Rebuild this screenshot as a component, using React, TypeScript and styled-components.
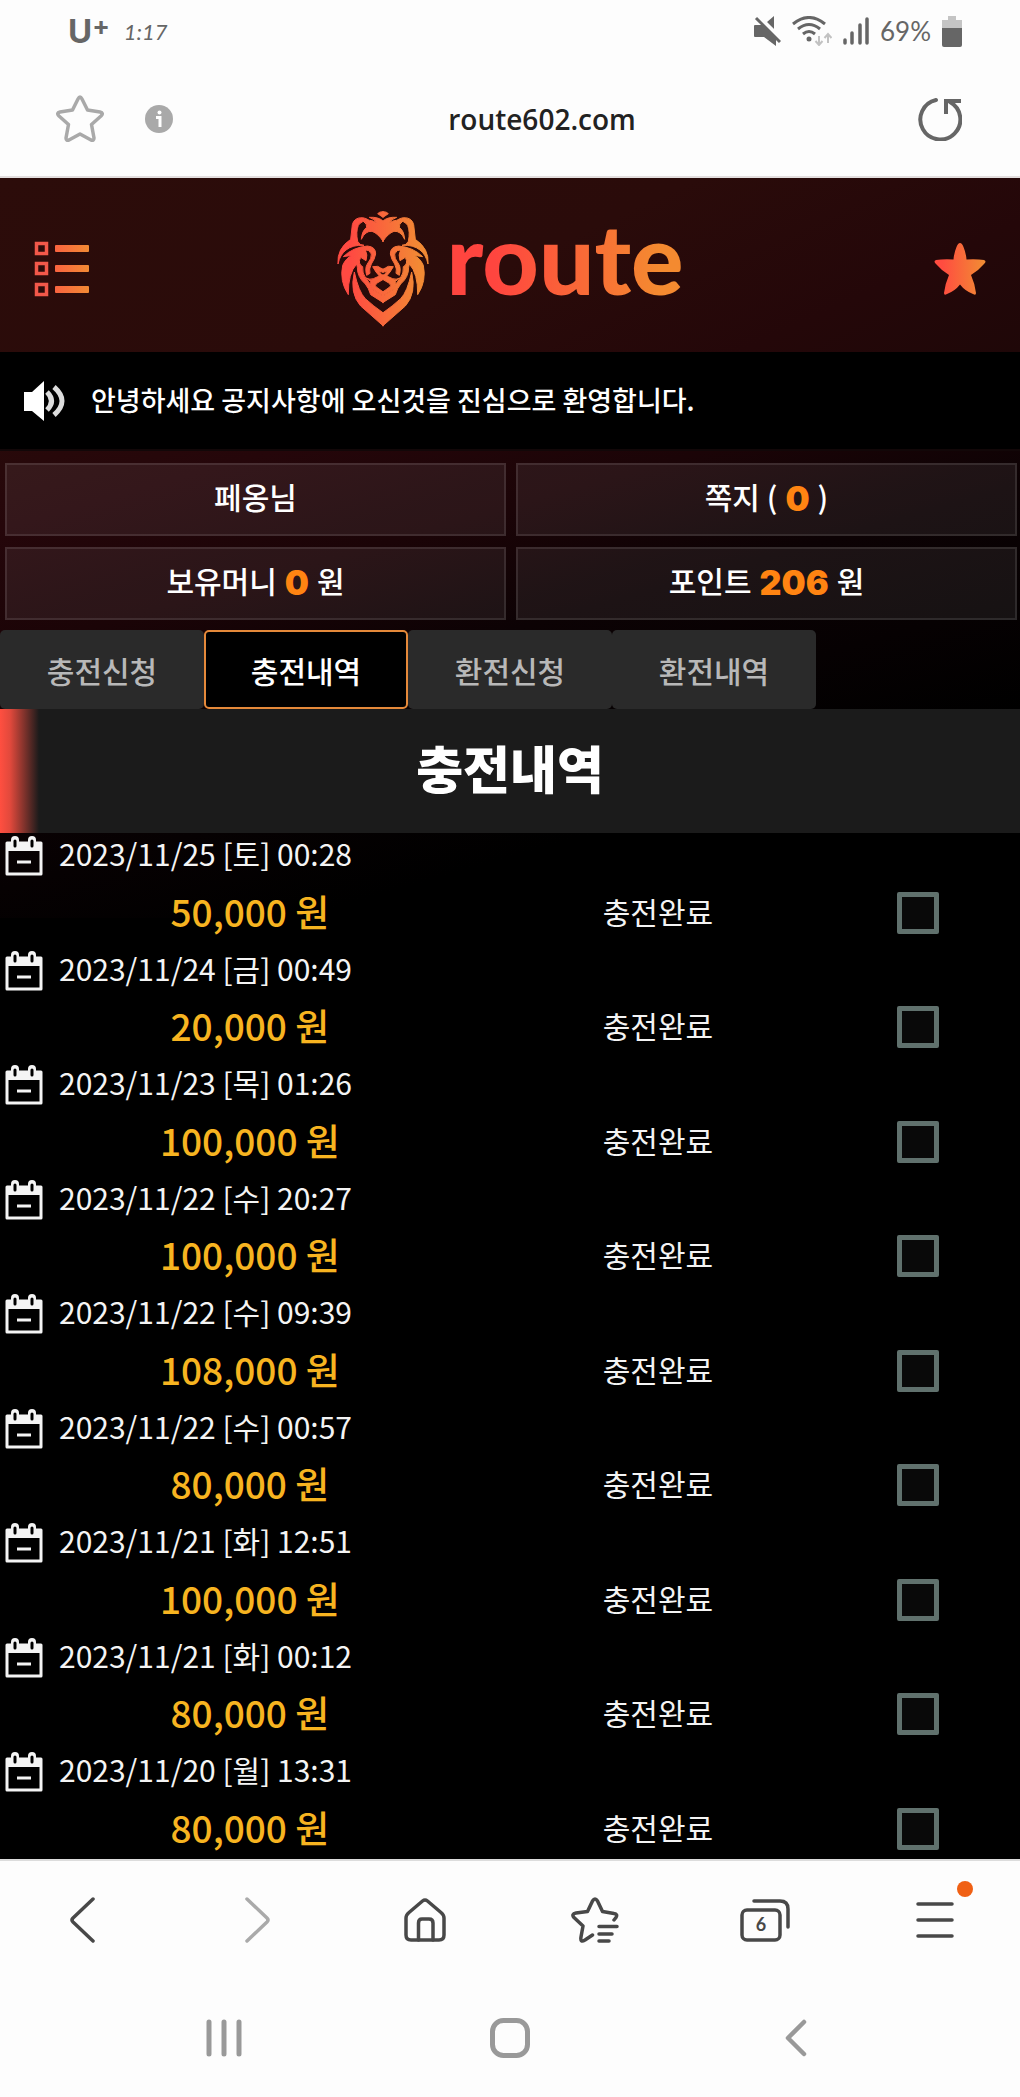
import React from "react";
import styled, { createGlobalStyle, css } from "styled-components";

const GlobalStyle = createGlobalStyle`
  * { box-sizing: border-box; }
  body {
    margin: 0;
    background: #fdfdfd;
    font-family: "Noto Sans CJK KR", "Noto Sans", sans-serif;
  }
  button { font: inherit; color: inherit; border: 0; padding: 0; background: none; cursor: pointer; }
  svg { display: block; }
`;

const Phone = styled.div`
  display: flex;
  flex-direction: column;
  height: 100vh;
`;

/* ---------- device status and address bar ---------- */

const StatusBar = styled.div`
  display: flex;
  align-items: center;
  justify-content: space-between;
  height: 60px;
  padding: 2px 58px 0 68px;
  color: #666;
  font-family: Lato, "Open Sans", sans-serif;
  font-size: 26px;
`;

const StatusGroup = styled.div<{ $gap: number }>`
  display: flex;
  align-items: center;
  gap: ${(p) => p.$gap}px;
`;

const Carrier = styled.span`
  font-family: Inter, sans-serif;
  font-size: 33px;
  font-weight: 700;
  line-height: 36px;
  sup { font-size: 26px; line-height: 0; vertical-align: 8px; }
`;

const Clock = styled.span`
  font-style: italic;
  font-size: 22px;
`;

const AddressBar = styled.div`
  display: grid;
  grid-template-columns: 150px 1fr 150px;
  align-items: center;
  height: 118px;
  padding: 2px 58px 0 56px;
  border-bottom: 2px solid #e3dede;
`;

const AddressActions = styled.div<{ $end?: boolean }>`
  display: flex;
  align-items: center;
  gap: 41px;
  color: #a9a9a9;
  ${(p) => p.$end && css`
    justify-content: flex-end;
    color: #666;
  `}
`;

const Address = styled.span`
  margin-left: 66px;
  justify-self: center;
  color: #222;
  font-family: "Open Sans", sans-serif;
  font-size: 28px;
  font-weight: 600;
`;

/* ---------- site ---------- */

const Site = styled.main`
  flex: 1;
  min-height: 0;
  overflow-y: auto;
  scrollbar-width: none;
  color: #fff;
  background: #000 linear-gradient(164deg, #2c0c0a 0%, #2a0b0a 20%, #25060a 34%, #1b0407 46%, #0c0204 58%, #000 80%) no-repeat;
  background-size: 100% 740px;
`;

const SiteHeader = styled.header`
  display: grid;
  grid-template-columns: 1fr auto 1fr;
  align-items: center;
  height: 174px;
  padding: 8px 34px 0;
  background: linear-gradient(155deg, #2c0c0a 0%, #2a0b0a 50%, #240709 80%, #1f0708 100%);
  & > :last-child { justify-self: end; }
`;

const Brand = styled.a`
  display: flex;
  align-items: center;
  gap: 18px;
  text-decoration: none;
`;

const BrandName = styled.span`
  font-family: Lato, sans-serif;
  font-size: 98px;
  font-weight: 900;
  line-height: 116px;
  padding-bottom: 24px;
  color: transparent;
  background: linear-gradient(90deg, #ff453f 20%, #f48a30 90%);
  background-clip: text;
`;

const Notice = styled.div`
  display: flex;
  align-items: center;
  gap: 26px;
  height: 99px;
  padding: 0 24px;
  background: #000;
  border-bottom: 2px solid #120708;
  font-size: 27px;
  font-weight: 500;
  p { margin: 0; padding-bottom: 3px; }
`;

const Account = styled.section`
  display: grid;
  grid-template-columns: 1fr 1fr;
  gap: 11px 10px;
  padding: 12px 3px 10px 5px;
`;

const AccountCell = styled.div`
  display: flex;
  align-items: center;
  justify-content: center;
  gap: 8px;
  height: 73px;
  border: 2px solid rgba(255, 255, 255, 0.1);
  background: rgba(255, 255, 255, 0.07);
  font-size: 30px;
  font-weight: 500;
  line-height: 36px;
  padding-bottom: 8px;
`;

const Figure = styled.strong`
  padding-top: 6px;
  color: #ff8412;
  font-family: Inter, sans-serif;
  font-size: 34px;
  font-weight: 900;
  line-height: 36px;
`;

const Tabs = styled.nav`
  display: grid;
  grid-template-columns: repeat(5, 1fr);
`;

const Tab = styled.button<{ $active?: boolean }>`
  height: 79px;
  border-radius: 5px;
  color: #b8b8b8;
  background: #2a2a2a;
  font-size: 30px;
  font-weight: 500;
  line-height: 44px;
  ${(p) => p.$active && css`
    color: #fff;
    background: #000;
    border: 2px solid #e5893a;
  `}
`;

const Title = styled.h1`
  margin: 0;
  padding-bottom: 8px;
  height: 124px;
  display: flex;
  align-items: center;
  justify-content: center;
  background: linear-gradient(90deg, #ff4f40 0, #e2493c 10px, #1b1b1b 39px);
  font-size: 51px;
  font-weight: 900;
`;

const History = styled.table`
  width: 100%;
  table-layout: fixed;
  border-collapse: collapse;
  td, th { padding: 0; text-align: center; vertical-align: middle; }
`;

const Record = styled.tbody`
  & > tr:first-child { height: 44px; }
  & > tr:last-child { height: 70px; }
  &:nth-of-type(odd) > tr:last-child { height: 71px; }
`;

const DateLine = styled.div`
  display: flex;
  align-items: center;
  gap: 16px;
  height: 44px;
  padding: 2px 0 0 5px;
  color: #f4f4f4;
  font-size: 30px;
  font-weight: 400;
  line-height: 36px;
  time { padding-bottom: 6px; }
`;

const Amount = styled.td`
  color: #f7b420;
  font-size: 37px;
  font-weight: 500;
  line-height: 44px;
  && { padding-bottom: 4px; }
`;

const State = styled.td`
  color: #f4f4f4;
  font-size: 30px;
  line-height: 44px;
  && { padding-bottom: 4px; }
`;

const Check = styled.input`
  appearance: none;
  display: block;
  width: 42px;
  height: 42px;
  margin: 0 auto;
  border: 5px solid #60716d;
  border-radius: 2px;
  background: #090909;
  &:checked { background: #60716d; }
`;

/* ---------- bottom bars ---------- */

const BrowserNav = styled.nav`
  display: grid;
  grid-template-columns: repeat(6, 1fr);
  height: 120px;
  border-top: 2px solid #dcdcdc;
  color: #484848;
`;

const DeviceNav = styled.nav`
  display: grid;
  grid-template-columns: repeat(3, 1fr);
  height: 118px;
  padding: 0 8%;
  color: #999;
`;

const BarButton = styled.button<{ $muted?: boolean }>`
  position: relative;
  display: flex;
  align-items: center;
  justify-content: center;
  color: ${(p) => (p.$muted ? "#aaa" : "inherit")};
`;

const Dot = styled.span`
  position: absolute;
  top: 20px;
  left: calc(50% + 22px);
  width: 16px;
  height: 16px;
  border-radius: 50%;
  background: #f06014;
`;

/* ---------- drawings ---------- */

const line = { fill: "none", stroke: "currentColor", strokeLinecap: "round", strokeLinejoin: "round" } as const;

const LionHalf = () => (
  <g>
    <path d="M189 64 L173 53 Q178 47 189 47Z" />
    <path d="M190 76 Q176 62 148 64 Q164 70 170 80 Q148 68 130 76 Q142 84 140 94 Q126 104 124 130 Q136 104 156 106 Q174 112 190 137Z" />
    <path d="M92 130 L97 86 Q102 64 128 65 Q140 67 147 73 Q124 74 115 88 Q107 108 113 136 Q118 148 132 148 Q98 146 78 162 Q60 176 54 204 Q50 158 92 130Z" />
    <path d="M70 182 Q98 154 142 150 Q167 152 167 174 Q164 190 154 204 Q146 220 150 232 L140 238 Q134 216 142 204 Q156 186 154 174 Q148 160 136 162 Q144 176 138 194 L122 184 Q112 204 128 212 Q126 232 138 248 Q152 262 160 282 L190 301 V320 L152 296 Q146 276 136 264 Q112 244 112 214 L110 204 Q84 232 85 296 Q58 256 68 208 Q78 186 96 178Z" />
    <path d="M158 212 Q176 208 182 216 L190 220 V229 L179 226 Q178 234 190 238 V250 L170 262 Q162 270 170 274 L190 288 V300 L158 280 Q150 266 152 256 L138 246 Q150 252 160 248 L178 240 Q168 230 158 212Z" />
    <path d="M103 228 Q116 288 136 308 Q160 330 190 351 V390 L122 330 Q88 292 103 228Z" />
  </g>
);

const Lion = () => (
  <svg width="92" height="116" viewBox="51 45 276 348" aria-hidden="true">
    <defs>
      <linearGradient id="mane" x1="0" x2="1">
        <stop offset="0.15" stopColor="#ff4a42" />
        <stop offset="0.9" stopColor="#f28a34" />
      </linearGradient>
      <mask id="lion" maskUnits="userSpaceOnUse" x="51" y="45" width="276" height="348">
        <g fill="#fff" stroke="#fff" strokeWidth="3">
          <LionHalf />
          <g transform="matrix(-1 0 0 1 378 0)"><LionHalf /></g>
        </g>
      </mask>
    </defs>
    <rect x="51" y="45" width="276" height="348" fill="url(#mane)" mask="url(#lion)" />
  </svg>
);

const ListIcon = () => (
  <svg width="56" height="56" viewBox="0 0 56 56" aria-hidden="true">
    <defs>
      <linearGradient id="bar" gradientUnits="userSpaceOnUse" x1="20" x2="55" y1="0" y2="0">
        <stop offset="0" stopColor="#fa6240" />
        <stop offset="1" stopColor="#f28a34" />
      </linearGradient>
    </defs>
    {[0, 20, 41].map((y) => (
      <g key={y}>
        <rect x="2.5" y={y + 2.5} width="10" height="10" fill="none" stroke="#f2584a" strokeWidth="3.500" />
        <rect x="21" y={y + 4} width="34" height="7" rx="1" fill="url(#bar)" />
      </g>
    ))}
  </svg>
);

const FavouriteIcon = () => (
  <svg width="52" height="54" viewBox="0 0 52 54" aria-hidden="true">
    <defs>
      <linearGradient id="fav" x1="0" x2="1">
        <stop offset="0.15" stopColor="#ff4c40" />
        <stop offset="0.95" stopColor="#f28a34" />
      </linearGradient>
    </defs>
    <path fill="url(#fav)" d="M26 1 Q28 1 29.500 5 Q32 11 32.500 17.500 Q43 17 50 18 Q53 19 50 22 Q45 28 37 33 Q41 42 42 51 Q42 54 39 52 Q31 49 26 42.500 Q21 49 13 52 Q10 54 10 51 Q11 42 15 33 Q7 28 2 22 Q-1 19 2 18 Q9 17 19.500 17.500 Q20 11 22.500 5 Q24 1 26 1Z" />
  </svg>
);

const SpeakerIcon = () => (
  <svg width="41" height="42" viewBox="0 0 41 42" fill="none" aria-hidden="true">
    <path fill="#fff" d="M0 12h8L20 1v40L8 31H0z" />
    <path stroke="#ddd" strokeWidth="5" d="M23 12q9 9 0 18M30 7q16 14 0 28" />
  </svg>
);

const CalendarIcon = () => (
  <svg width="38" height="40" viewBox="0 0 38 40" aria-hidden="true">
    <path d="M2 7H36V38H2Z" fill="none" stroke="#f4f4f4" strokeWidth="3" strokeLinejoin="round" />
    <path d="M1 6H37V15H1Z" fill="#f4f4f4" />
    <path d="M10 4V10M27 4V10" stroke="#f4f4f4" strokeWidth="8" strokeLinecap="round" />
    <path d="M10 5V10M27 5V10" stroke="#000" strokeWidth="3" strokeLinecap="round" />
    <path d="M12 26H26" stroke="#f4f4f4" strokeWidth="3" />
  </svg>
);

const MuteIcon = () => (
  <svg width="27" height="30" viewBox="0 0 27 30" aria-hidden="true">
    <path fill="#666" d="M1 9H8L22 22V30L10 21H1Q0 21 0 20V10Q0 9 1 9ZM13 6L20 0V13Z" />
    <path d="M5 1L28 23" stroke="#fdfdfd" strokeWidth="3" />
    <path d="M2 2L26 26" stroke="#666" strokeWidth="3" />
  </svg>
);

const WifiIcon = () => (
  <svg width="40" height="30" viewBox="0 0 40 30" fill="none" stroke="#666" strokeWidth="3" aria-hidden="true">
    <path d="M1 8Q17-5 33 8M6 13Q17 4 28 13M11 18Q17 13 23 18" />
    <circle cx="17" cy="23" r="2.500" fill="#666" stroke="none" />
    <path stroke="#c2c2c2" strokeWidth="2" d="M27 20V29M23.500 25L27 29L30.500 25M36 27V18M32.500 22L36 18L39.500 22" />
  </svg>
);

const SignalIcon = () => (
  <svg width="26" height="28" viewBox="0 0 26 28" {...line} strokeWidth="3.500" aria-hidden="true">
    <path d="M2 23V26M9 16V26M17 8V26M24 2V26" />
  </svg>
);

const BatteryIcon = () => (
  <svg width="20" height="31" viewBox="0 0 20 31" aria-hidden="true">
    <path fill="#c4c4c4" d="M6 0H14V4H20V13H0V4H6Z" />
    <path fill="#666" d="M0 12H20V29Q20 31 18 31H2Q0 31 0 29Z" />
  </svg>
);

const StarOutline = () => (
  <svg width="48" height="48" viewBox="0 0 48 48" {...line} strokeWidth="3.500" aria-hidden="true">
    <path d="M22 4Q24 0 26 4L31.500 15L44 17Q48 18 45 21L35.500 29.500L38 43Q38 46 35 45L24 39L13 45Q10 46 10 43L12.500 29.500L3 21Q0 18 4 17L16.500 15Z" />
  </svg>
);

const InfoIcon = () => (
  <svg width="28" height="28" viewBox="0 0 28 28" aria-hidden="true">
    <circle cx="14" cy="14" r="14" fill="#a9a9a9" />
    <path d="M11 12.500H15V22" fill="none" stroke="#fff" strokeWidth="3" />
    <circle cx="14.500" cy="7.500" r="2" fill="#fff" />
  </svg>
);

const ReloadIcon = () => (
  <svg width="44" height="44" viewBox="0 0 44 44" {...line} strokeWidth="4" aria-hidden="true">
    <path d="M18 3A20 20 0 1 0 32 5" />
    <path strokeLinecap="butt" strokeLinejoin="miter" d="M28 17V4H43" />
  </svg>
);

const ChevronIcon = ({ right }: { right?: boolean }) => (
  <svg width="32" height="46" viewBox="0 0 32 46" {...line} strokeWidth="3.500" aria-hidden="true">
    <path d={right ? "M8 2L28 21Q30 23 28 25L8 44" : "M24 2L4 21Q2 23 4 25L24 44"} />
  </svg>
);

const HomeIcon = () => (
  <svg width="42" height="44" viewBox="0 0 42 44" {...line} strokeWidth="3.500" aria-hidden="true">
    <path d="M18.500 3Q21 1 23.500 3L37 14.500Q40 17 40 20V37Q40 42 35 42H7Q2 42 2 37V20Q2 17 5 14.500Z" />
    <path d="M14.500 42V25Q14.500 21 18 21H25Q29 21 29 25V42" />
  </svg>
);

const BookmarksIcon = () => (
  <svg width="48" height="46" viewBox="0 0 48 46" {...line} strokeWidth="3.500" aria-hidden="true">
    <path d="M21.500 38L14 43Q9 46 10 40L12 29L3 20.500Q0 17 5 16L16.500 14.500L21.500 4Q24 0 26.500 4L31.500 14.500L43 16.500Q47 17 45 20.500L43 23" />
    <path d="M28 29.500H46M28 37H41M28 44H38" />
  </svg>
);

const PagesIcon = () => (
  <svg width="50" height="44" viewBox="0 0 50 44" aria-hidden="true">
    <g {...line} strokeWidth="3.500">
      <rect x="2" y="12" width="38" height="30" rx="5" />
      <path d="M14 3H40Q48 3 48 11V29" />
    </g>
    <text x="21" y="33" textAnchor="middle" fill="currentColor" fontFamily="Lato, sans-serif" fontSize="18" fontWeight="700">6</text>
  </svg>
);

const MenuIcon = () => (
  <svg width="40" height="38" viewBox="0 0 40 38" {...line} strokeWidth="3.500" aria-hidden="true">
    <path d="M3 3H37M3 19H37M3 35H37" />
  </svg>
);

const RecentsIcon = () => (
  <svg width="36" height="38" viewBox="0 0 36 38" {...line} strokeWidth="5" aria-hidden="true">
    <path d="M3 3V35M18 3V35M33 3V35" />
  </svg>
);

const HomeKeyIcon = () => (
  <svg width="40" height="40" viewBox="0 0 40 40" {...line} strokeWidth="5" aria-hidden="true">
    <rect x="2.500" y="2.500" width="35" height="35" rx="11" />
  </svg>
);

const BackKeyIcon = () => (
  <svg width="22" height="38" viewBox="0 0 22 38" {...line} strokeWidth="4.500" aria-hidden="true">
    <path d="M19 3L3 19L19 35" />
  </svg>
);

/* ---------- data ---------- */

const records = [
  { date: "2023/11/25 [토] 00:28", amount: "50,000" },
  { date: "2023/11/24 [금] 00:49", amount: "20,000" },
  { date: "2023/11/23 [목] 01:26", amount: "100,000" },
  { date: "2023/11/22 [수] 20:27", amount: "100,000" },
  { date: "2023/11/22 [수] 09:39", amount: "108,000" },
  { date: "2023/11/22 [수] 00:57", amount: "80,000" },
  { date: "2023/11/21 [화] 12:51", amount: "100,000" },
  { date: "2023/11/21 [화] 00:12", amount: "80,000" },
  { date: "2023/11/20 [월] 13:31", amount: "80,000" },
];

const tabs = ["충전신청", "충전내역", "환전신청", "환전내역"];

export default function App() {
  return (
    <Phone>
      <GlobalStyle />
      <StatusBar>
        <StatusGroup $gap={14}>
          <Carrier>U<sup>+</sup></Carrier>
          <Clock>1:17</Clock>
        </StatusGroup>
        <StatusGroup $gap={11}>
          <MuteIcon />
          <WifiIcon />
          <SignalIcon />
          <span>69%</span>
          <BatteryIcon />
        </StatusGroup>
      </StatusBar>
      <AddressBar>
        <AddressActions>
          <button aria-label="Bookmark"><StarOutline /></button>
          <button aria-label="Site information"><InfoIcon /></button>
        </AddressActions>
        <Address>route602.com</Address>
        <AddressActions $end>
          <button aria-label="Reload"><ReloadIcon /></button>
        </AddressActions>
      </AddressBar>

      <Site>
        <SiteHeader>
          <button aria-label="메뉴"><ListIcon /></button>
          <Brand href="#">
            <Lion />
            <BrandName>route</BrandName>
          </Brand>
          <button aria-label="즐겨찾기"><FavouriteIcon /></button>
        </SiteHeader>
        <Notice>
          <SpeakerIcon />
          <p>안녕하세요 공지사항에 오신것을 진심으로 환영합니다.</p>
        </Notice>
        <Account>
          <AccountCell>페옹님</AccountCell>
          <AccountCell>쪽지 ( <Figure>0</Figure> )</AccountCell>
          <AccountCell>보유머니 <Figure>0</Figure> 원</AccountCell>
          <AccountCell>포인트 <Figure>206</Figure> 원</AccountCell>
        </Account>
        <Tabs>
          {tabs.map((name, i) => (
            <Tab key={name} $active={i === 1}>{name}</Tab>
          ))}
        </Tabs>
        <Title>충전내역</Title>
        <History>
          <colgroup>
            <col width="49%" />
            <col width="31%" />
            <col width="20%" />
          </colgroup>
          {records.map((r) => (
            <Record key={r.date}>
              <tr>
                <th colSpan={3} scope="rowgroup">
                  <DateLine>
                    <CalendarIcon />
                    <time>{r.date}</time>
                  </DateLine>
                </th>
              </tr>
              <tr>
                <Amount>{r.amount} 원</Amount>
                <State>충전완료</State>
                <td><Check type="checkbox" aria-label={r.date} /></td>
              </tr>
            </Record>
          ))}
        </History>
      </Site>

      <BrowserNav>
        <BarButton aria-label="Back"><ChevronIcon /></BarButton>
        <BarButton aria-label="Forward" $muted><ChevronIcon right /></BarButton>
        <BarButton aria-label="Home"><HomeIcon /></BarButton>
        <BarButton aria-label="Bookmarks"><BookmarksIcon /></BarButton>
        <BarButton aria-label="Pages"><PagesIcon /></BarButton>
        <BarButton aria-label="Menu"><MenuIcon /><Dot /></BarButton>
      </BrowserNav>
      <DeviceNav>
        <BarButton aria-label="Recent apps"><RecentsIcon /></BarButton>
        <BarButton aria-label="Home screen"><HomeKeyIcon /></BarButton>
        <BarButton aria-label="Go back"><BackKeyIcon /></BarButton>
      </DeviceNav>
    </Phone>
  );
}
